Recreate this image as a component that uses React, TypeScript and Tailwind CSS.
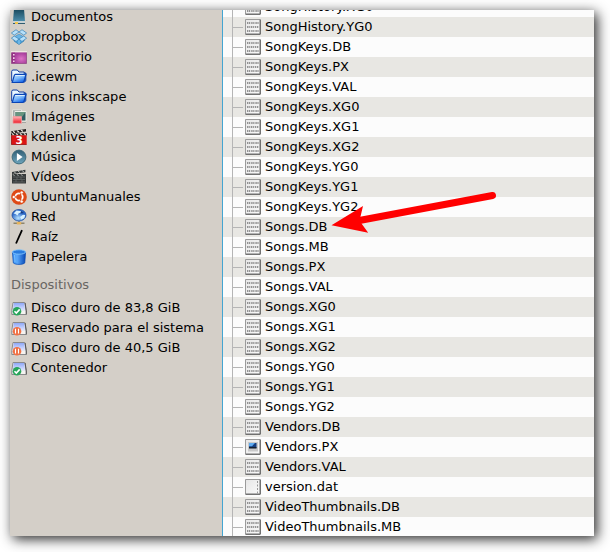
import type { ReactNode } from 'react';

const files: string[] = [
  'SongHistory.XG0', 'SongHistory.YG0', 'SongKeys.DB', 'SongKeys.PX', 'SongKeys.VAL',
  'SongKeys.XG0', 'SongKeys.XG1', 'SongKeys.XG2', 'SongKeys.YG0', 'SongKeys.YG1',
  'SongKeys.YG2', 'Songs.DB', 'Songs.MB', 'Songs.PX', 'Songs.VAL', 'Songs.XG0',
  'Songs.XG1', 'Songs.XG2', 'Songs.YG0', 'Songs.YG1', 'Songs.YG2', 'Vendors.DB',
  'Vendors.PX', 'Vendors.VAL', 'version.dat', 'VideoThumbnails.DB', 'VideoThumbnails.MB',
];

function Icon({ children }: { children: ReactNode }) {
  return <svg className="size-4 shrink-0" viewBox="0 0 16 16" fill="none">{children}</svg>;
}

function Gradients() {
  return (
    <svg className="absolute size-0" aria-hidden="true">
      <defs>
        <linearGradient id="book" x2="0" y2="1"><stop stopColor="#19485b" /><stop offset="1" stopColor="#4b8ca9" /></linearGradient>
        <radialGradient id="desk" cx="0.65" cy="0.6"><stop stopColor="#dc74c6" /><stop offset="1" stopColor="#a73d9b" /></radialGradient>
        <linearGradient id="folder" x2="0.6" y2="1"><stop stopColor="#d8efff" /><stop offset="0.55" stopColor="#7bb8fa" /><stop offset="1" stopColor="#1767e8" /></linearGradient>
        <linearGradient id="red" x2="0" y2="1"><stop stopColor="#ffb5b8" /><stop offset="1" stopColor="#ee1924" /></linearGradient>
        <linearGradient id="play" x2="0" y2="1"><stop stopColor="#315d73" /><stop offset="1" stopColor="#6fa6bd" /></linearGradient>
        <radialGradient id="globe" cx="0.45" cy="0.75"><stop stopColor="#b9e4ff" /><stop offset="1" stopColor="#2b68c8" /></radialGradient>
        <linearGradient id="can"><stop stopColor="#3b91f5" /><stop offset="0.35" stopColor="#5aa9fb" /><stop offset="1" stopColor="#0647b5" /></linearGradient>
        <linearGradient id="disk" x2="0" y2="1"><stop stopColor="#8ea8f7" /><stop offset="1" stopColor="#e4e8ff" /></linearGradient>
        <linearGradient id="paper" x2="1" y2="1"><stop stopColor="#e6e6e6" /><stop offset="1" stopColor="#fafafa" /></linearGradient>
      </defs>
    </svg>
  );
}

function Book() {
  return <Icon>
    <path d="M3 0h10l1 12H2z" fill="url(#book)" />
    <path d="M2 12h12v2H2z" fill="#c9d3d5" /><path d="M2 14h12v1H2z" fill="#315c6f" />
    <path d="M4 13h3v2H4z" fill="#f1c64b" />
  </Icon>;
}

function Dropbox() {
  return <Icon>
    <path d="M3 8l5 3 5-3v4l-5 3.5L3 12z" fill="#4ca4dd" stroke="#276fa3" strokeWidth=".6" />
    <path d="M8 5l5 3-5 3-5-3z" fill="#68b5e7" stroke="#347eb4" strokeWidth=".5" />
    <path d="M5 .7L8 3 3.2 6.2.4 4zM11 .7L8 3l4.8 3.2L15.6 4zM3.2 7L8 10l-3 2.5L.4 9.2zM12.8 7L8 10l3 2.5 4.6-3.3z" fill="#b6e0fa" stroke="#3780b5" strokeWidth=".7" />
    <path d="M8 11v4" stroke="#a9ddf9" strokeWidth=".7" />
  </Icon>;
}

function Desktop() {
  return <Icon>
    <path d="M.5 2.5h15v12H.5z" fill="url(#desk)" stroke="#9c578f" />
    <path d="M0 2h16v1.4H0z" fill="#eee8e2" />
    <path d="M1 3.4h3V14H1z" fill="#82256f" opacity=".5" />
    <path d="M2 5h1.6v1.6H2zm0 3.3h1.6V10H2zm0 3.3h1.6v1.5H2z" fill="#f7d3eb" />
  </Icon>;
}

function Folder() {
  return <Icon>
    <path d="M.7 12V2.4L1.5 1h4.8L8 3h5.2v9.5H1z" fill="#e9f7ff" stroke="#103ca0" />
    <path d="M13.2 4h1.6v7.4l-1.4 2" fill="#4d91ed" stroke="#0a3b9c" />
    <path d="M1.2 13.5L3.4 6l1-.7H15l-2.1 7.4-.8.8z" fill="url(#folder)" stroke="#0a44b5" strokeWidth="1.2" />
    <path d="M4.4 6.5h9.1" stroke="#eefaff" strokeWidth=".8" />
  </Icon>;
}

function Images() {
  return <Icon>
    <path d="M1.5.8h9v10h-9z" fill="#a4aaa7" stroke="#e4e6df" />
    <path d="M4 2.5h11v9.5H4z" fill="#315d62" stroke="#eff0e9" />
    <path d="M4.5 3h10l-3 4.5h-7z" fill="#67947f" />
    <path d="M2 7.5h8.5v6.7H2z" fill="url(#red)" stroke="#ee9a9d" strokeWidth=".8" />
    <path d="M11 13.5h4" stroke="#a5a5a1" />
  </Icon>;
}

function Kdenlive() {
  return <Icon>
    <path d="M0 2.2L15 0v2.4L1 4.6zM0 4.2h16v2.3H0z" fill="#24201f" />
    <path d="M2 2.3l2 1.4M6 1.7l2 1.4M10 1.1l2 1.4M1 4.3l2 2M5 4.3l2 2M9 4.3l2 2M13 4.3l2 2" stroke="#e7e2db" strokeWidth="1.2" />
    <path d="M.3 6.3h15.4v9.4H.3z" fill="#db1514" />
    <path d="M.5 6.3v9.2h15" stroke="#8e1111" strokeWidth=".7" />
    <text x="8.2" y="14.8" textAnchor="middle" fill="#fff" fontFamily="DejaVu Sans, sans-serif" fontSize="10.5" fontWeight="bold">3</text>
  </Icon>;
}

function Play() {
  return <Icon><circle cx="8" cy="8" r="6.9" fill="url(#play)" stroke="#416c7c" /><path d="M5.9 4L11.6 8l-5.7 4z" fill="#fff" /></Icon>;
}

function Video() {
  return <Icon>
    <path d="M1 3L14.4.8v2.5L1 5zM1 5h14v9.5H1z" fill="#363939" />
    <path d="M3 2.8l2 1.5M7 2.1l2 1.5M11 1.5l2 1.5M2 5.2l1.5 1.8M6 5.2l1.5 1.8M10 5.2l1.5 1.8" stroke="#a8aca9" />
    <path d="M2 8h12M2 10.5h12M2 13h12M6 8v2M10 8v2M5 11v2M11 11v2" stroke="#676c6a" strokeWidth=".7" />
  </Icon>;
}

function Ubuntu() {
  return <Icon>
    <circle cx="8" cy="8" r="7.8" fill="#df4a16" />
    <circle cx="8" cy="8" r="3.7" stroke="#fff" strokeWidth="1.8" />
    <path d="M8 8H2M8 8l3-5.2M8 8l3 5.2" stroke="#df4a16" strokeWidth="1" />
    <g fill="#fff" stroke="#df4a16" strokeWidth=".6"><circle cx="2.8" cy="8" r="1.6" /><circle cx="10.7" cy="3.5" r="1.6" /><circle cx="10.7" cy="12.5" r="1.6" /></g>
  </Icon>;
}

function Network() {
  return <Icon>
    <path d="M8 12v3M2.5 14.3h11" stroke="#8d856d" strokeWidth="1.4" /><path d="M5.8 13h4.4v2.5H5.8z" fill="#e6b35c" />
    <ellipse cx="8" cy="6.2" rx="7" ry="5.8" fill="url(#globe)" stroke="#2354a5" strokeWidth=".8" />
    <path d="M2.5 4.5l3-3 4 .4 1.2 1.4-3 1-1.2 2.3-2-1.6zm6.5 3.4l3-2.2 2.3.4-1 3.2-3 1.2z" fill="#d7f1ff" />
    <path d="M10 2l3 2-3.5.5z" fill="#163c80" />
  </Icon>;
}

function Slash() {
  return <Icon><path d="M11 1.2L5 14.5" stroke="#000" strokeWidth="1.8" /></Icon>;
}

function Trash() {
  return <Icon>
    <path d="M1.4 3.2l.9 10.7c2 2 9.4 2 11.5 0l.8-10.7z" fill="url(#can)" stroke="#0c4baf" strokeWidth=".7" />
    <ellipse cx="8" cy="3" rx="6.6" ry="2.2" fill="#287bdf" stroke="#81c5fc" strokeWidth=".9" />
    <path d="M3.5 6l.5 7" stroke="#76c0ff" />
  </Icon>;
}

function Disk({ paused = false }: { paused?: boolean }) {
  return <Icon>
    <path d="M2 2.5h11.8l1.3 8.2v3.8H.8v-4z" fill="#e8e8e8" stroke="#8a8a8c" />
    <path d="M2.8 3h10.3l1 7.5H1.8z" fill="url(#disk)" />
    <path d="M9 11h5.5v3H9z" fill="#f5f3f0" /><path d="M14.1 3l1.2 7.7v3.8" stroke="#555" />
    <circle cx="6" cy="11.2" r="4.3" fill={paused ? '#f17043' : '#28a65a'} />
    {paused ? <path d="M4.5 8.8v4.8M7.5 8.8v4.8" stroke="#fff" strokeWidth="1.1" /> : <path d="M3.5 11.3l1.8 1.8 3.4-3.7" stroke="#fff" strokeWidth="1.6" />}
  </Icon>;
}

function FileIcon({ name }: { name: string }) {
  const kind = name === 'Vendors.PX' ? 'image' : name === 'version.dat' ? 'plain' : 'binary';
  return <Icon>
    <path d="M.5.5h14.5v14.5H.5z" fill="url(#paper)" stroke="#9b9b9b" />
    <path d="M15.3.5v14.8H.5" stroke="#5c5c5c" strokeWidth="1" />
    {kind === 'binary' && <g stroke="#939393" strokeWidth="2">
      <path d="M2 4h12" strokeDasharray="1 .6 1.4 .8" />
      <path d="M2 8h12" strokeDasharray="1.5 .7 1 .7" />
      <path d="M2 12h12" strokeDasharray="1 .6 1.4 .8" />
    </g>}
    {kind === 'image' && <><path d="M3 3h10v9.5H3z" fill="#c9c9c9" /><path d="M4 4h7.5v5.2H4z" fill="#143d7f" /><path d="M4 4h6L7 7.2H4z" fill="#5eaaf0" /><path d="M4 8.2h7.5v1.2H4z" fill="#15191d" /></>}
    {kind === 'plain' && <path d="M12.5 2v12.5" stroke="#999" strokeDasharray="2 1.5" />}
  </Icon>;
}

const places: [string, ReactNode][] = [
  ['Documentos', <Book />], ['Dropbox', <Dropbox />], ['Escritorio', <Desktop />],
  ['.icewm', <Folder />], ['icons inkscape', <Folder />], ['Imágenes', <Images />],
  ['kdenlive', <Kdenlive />], ['Música', <Play />], ['Vídeos', <Video />],
  ['UbuntuManuales', <Ubuntu />], ['Red', <Network />], ['Raíz', <Slash />], ['Papelera', <Trash />],
];
const devices: [string, boolean][] = [
  ['Disco duro de 83,8 GiB', false], ['Reservado para el sistema', true],
  ['Disco duro de 40,5 GiB', true], ['Contenedor', false],
];

function Place({ name, icon }: { name: string; icon: ReactNode }) {
  return <li className="flex h-5 items-center gap-1 pl-px">{icon}<span>{name}</span></li>;
}

export default function App() {
  return (
    <div className="relative h-[552px] w-[610px] overflow-hidden bg-white p-2.5 font-['DejaVu_Sans',sans-serif] text-[13px] leading-5 whitespace-nowrap text-black">
      <Gradients />
      <main className="flex h-[526px] w-[584px] overflow-hidden bg-[#fcfcfc] shadow-[3px_3px_12px_rgba(0,0,0,0.85)]">
        <aside className="w-[212px] shrink-0 bg-[#d4cfc8]">
          <ul className="-mt-[3px]">{places.map(([name, icon]) => <Place key={name} name={name} icon={icon} />)}</ul>
          <h2 className="mt-2 h-[23px] pl-px text-[#686663]">Dispositivos</h2>
          <ul>{devices.map(([name, paused]) => <Place key={name} name={name} icon={<Disk paused={paused} />} />)}</ul>
        </aside>
        <section className="min-w-0 flex-1 border-l border-[#43a5d2]">
          <ul className="-mt-[13px]">
            {files.map((name) => (
              <li key={name} className="flex h-5 items-center pl-[9px] even:bg-[#e8e7e3]">
                <span className="flex h-full w-[11px] items-center border-l border-[#b5b5b5]"><span className="h-px w-full bg-[#b5b5b5]" /></span>
                <span className="ml-0.5 flex items-center gap-1"><FileIcon name={name} /><span>{name}</span></span>
              </li>
            ))}
          </ul>
        </section>
      </main>
      <svg className="absolute top-[185px] left-[325px]" width="180" height="55" viewBox="325 185 180 55" fill="none">
        <path d="M492.5 195.5L358 220.8" stroke="#f00" strokeWidth="7" strokeLinecap="round" />
        <path d="M331.5 225.2L363 206l-3.5 14.8 8.7 12z" fill="#f00" />
      </svg>
    </div>
  );
}
